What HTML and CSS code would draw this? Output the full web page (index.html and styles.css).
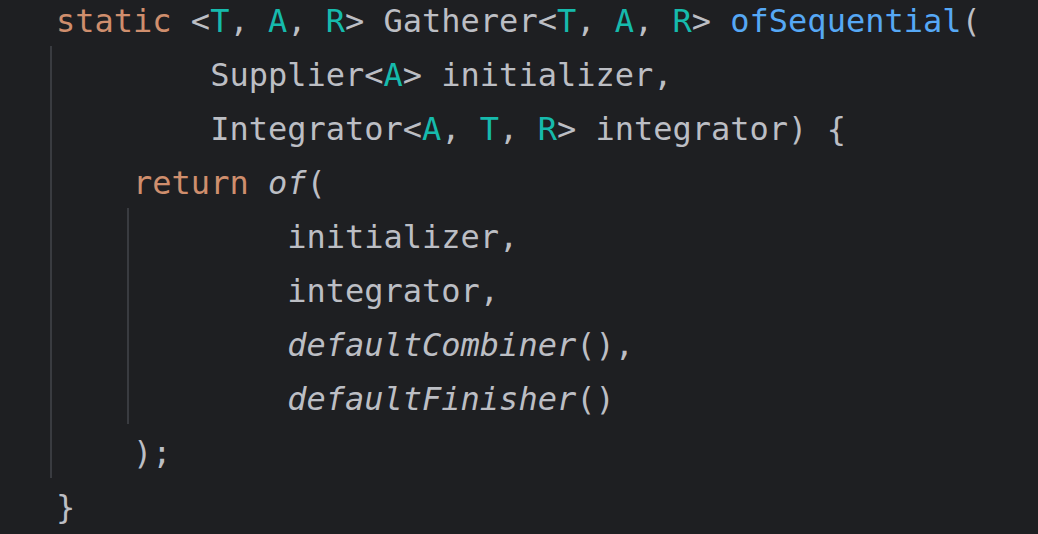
FILE: index.html
```html
<!DOCTYPE html>
<html lang="en">
<head>
<meta charset="utf-8">
<title>ofSequential</title>
<link rel="stylesheet" href="styles.css">
</head>
<body>
<pre class="code"><div class="line"><span class="kw">static</span> &lt;<span class="tp">T</span>, <span class="tp">A</span>, <span class="tp">R</span>&gt; Gatherer&lt;<span class="tp">T</span>, <span class="tp">A</span>, <span class="tp">R</span>&gt; <span class="fn">ofSequential</span>(</div><div class="scope s0"><div class="line">        Supplier&lt;<span class="tp">A</span>&gt; initializer,</div><div class="line">        Integrator&lt;<span class="tp">A</span>, <span class="tp">T</span>, <span class="tp">R</span>&gt; integrator) {</div><div class="line">    <span class="kw">return</span> <span class="it">of</span>(</div><div class="scope s1"><div class="line">            initializer,</div><div class="line">            integrator,</div><div class="line">            <span class="it">defaultCombiner</span>(),</div><div class="line">            <span class="it">defaultFinisher</span>()</div></div><div class="line">    );</div></div><div class="line">}</div></pre>
</body>
</html>
```
FILE: styles.css
```css
html, body {
  margin: 0;
  padding: 0;
  background: #1e1f22;
  overflow: hidden;
}

.code {
  margin: -6px 0 0 0;
  padding: 0 0 0 56px;
  font-family: "DejaVu Sans Mono", "Liberation Mono", monospace;
  font-size: 32px;
  color: #bcbec4;
  white-space: pre;
  display: flex;
  flex-direction: column;
}

.line {
  height: 54px;
  line-height: 54px;
}

.scope {
  position: relative;
  display: flex;
  flex-direction: column;
}

.scope::before {
  content: "";
  position: absolute;
  top: -2px;
  bottom: 2px;
  width: 2px;
  background: #393b40;
}

.s0::before { left: -6px; }
.s1::before { left: calc(4ch - 6px); }

.kw { color: #cf8e6d; }
.tp { color: #16baac; }
.fn { color: #56a8f5; }
.it { font-style: italic; }
```
